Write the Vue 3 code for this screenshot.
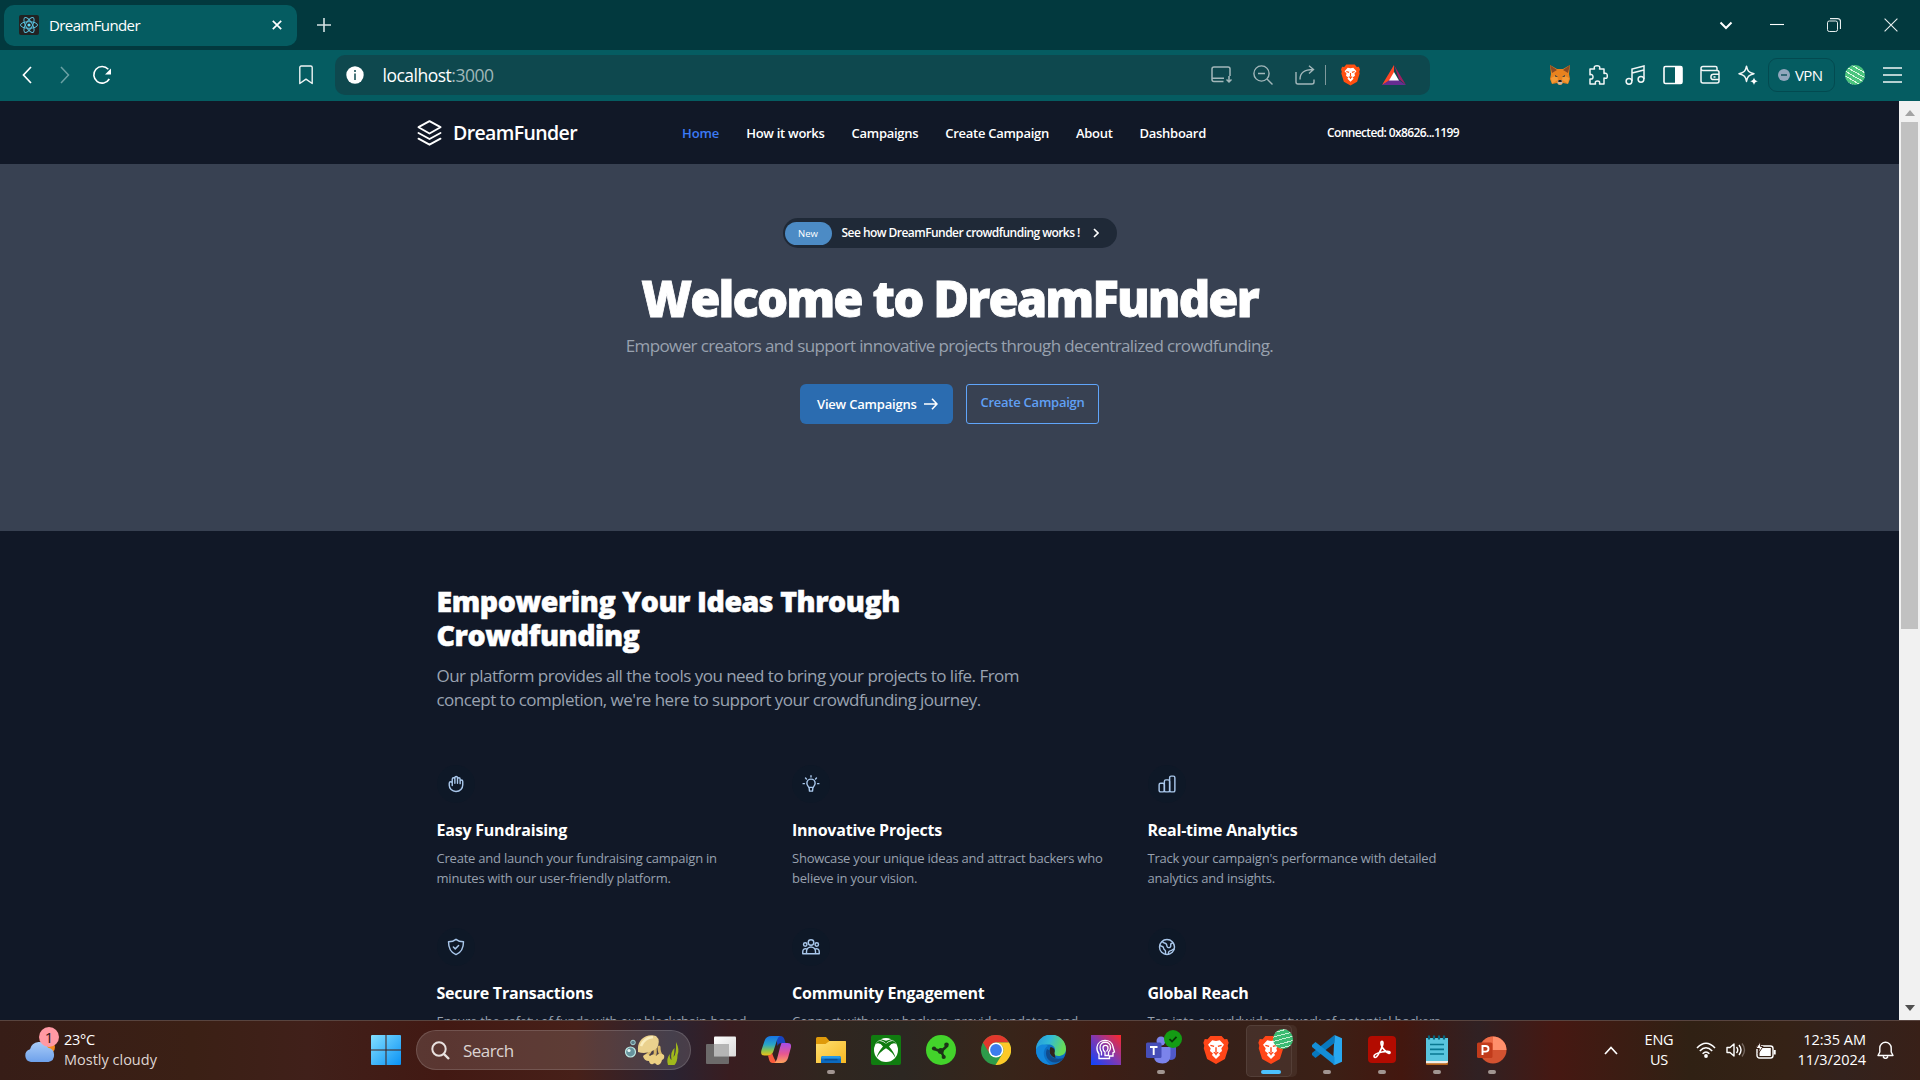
<script setup>
const nav = [
  { label: 'Home', active: true },
  { label: 'How it works' },
  { label: 'Campaigns' },
  { label: 'Create Campaign' },
  { label: 'About' },
  { label: 'Dashboard' },
]

const features = [
  { icon: 'hand', title: 'Easy Fundraising', lines: ['Create and launch your fundraising campaign in', 'minutes with our user-friendly platform.'] },
  { icon: 'bulb', title: 'Innovative Projects', lines: ['Showcase your unique ideas and attract backers who', 'believe in your vision.'] },
  { icon: 'chart', title: 'Real-time Analytics', lines: ["Track your campaign's performance with detailed", 'analytics and insights.'] },
  { icon: 'shield', title: 'Secure Transactions', lines: ['Ensure the safety of funds with our blockchain-based'] },
  { icon: 'people', title: 'Community Engagement', lines: ['Connect with your backers, provide updates, and'] },
  { icon: 'globe', title: 'Global Reach', lines: ['Tap into a worldwide network of potential backers'] },
]

const lionPath = 'M9 1h12l3 3.5 3-.2 1.5 4-1 3.2.6 2.5-3.6 11.5L15 31 5.500 25.500 1.900 14l.6-2.500-1-3.200 1.500-4 3 .2z'
const facePath = 'M15 6.500l4-.8 4.500 4.800-2.800 3.500.7 3-3.200 2.600 1.200 1.800L15 25.500l-4.400-4.100 1.200-1.800L8.600 17l.7-3-2.800-3.500L11 5.700z'
const browCut = 'M9 11l4 1.200M21 11l-4 1.200M15 13v5M12.500 18.500l2.500 1.200 2.500-1.200M15 19.700v2'
</script>

<template>
  <div class="screen">
    <header class="tabstrip">
      <div class="tab">
        <svg class="favicon" viewBox="0 0 20 20">
          <rect width="20" height="20" rx="2" fill="#222" />
          <g fill="none" stroke="#58bfdc" stroke-width="1">
            <ellipse cx="10" cy="10" rx="8.500" ry="3.300" />
            <ellipse cx="10" cy="10" rx="8.500" ry="3.300" transform="rotate(60 10 10)" />
            <ellipse cx="10" cy="10" rx="8.500" ry="3.300" transform="rotate(120 10 10)" />
          </g>
          <circle cx="10" cy="10" r="1.600" fill="#61dafb" />
        </svg>
        <span class="tab-title">DreamFunder</span>
        <svg class="tab-close" viewBox="0 0 10 10"><path d="M.8.800l8.400 8.400M9.200.800L.8 9.200" stroke="#fff" stroke-width="1.700" /></svg>
      </div>
      <svg class="plus" viewBox="0 0 14 14"><path d="M7 0v14M0 7h14" stroke="#d5e2e3" stroke-width="1.600" /></svg>
      <div class="window-controls">
        <svg viewBox="0 0 14 14"><path d="M1.500 4.500L7 10l5.500-5.500" fill="none" stroke="#fff" stroke-width="2" /></svg>
        <svg viewBox="0 0 14 14"><path d="M0 6.500h14" stroke="#fff" stroke-width="1.100" /></svg>
        <svg viewBox="0 0 14 14"><g fill="none" stroke="#e8efef"><rect x=".5" y="3" width="10" height="10.500" rx="1.800" /><path d="M3 .6h7.500a3 3 0 0 1 3 3V11" stroke-width="1.200" /></g></svg>
        <svg viewBox="0 0 14 14"><path d="M.6.600l12.800 12.800M13.400.600L.6 13.400" stroke="#e8efef" stroke-width="1.100" /></svg>
      </div>
    </header>

    <div class="toolbar">
      <svg class="back" viewBox="0 0 10 18"><path d="M9 1L1.500 9 9 17" fill="none" stroke="#fff" stroke-width="1.700" /></svg>
      <svg class="forward" viewBox="0 0 10 18"><path d="M1 1l7.500 8L1 17" fill="none" stroke="#6ba1a4" stroke-width="1.500" /></svg>
      <svg class="reload" viewBox="0 0 20 20"><path d="M16.300 4.300A8.300 8.300 0 1 0 17.300 14" fill="none" stroke="#fff" stroke-width="1.600" /><path d="M19 3.500v6h-6z" fill="#fff" /></svg>
      <svg class="bookmark" viewBox="0 0 14 20"><path d="M.8 18.500V2.500Q.8 1 2.300 1h9.400q1.500 0 1.500 1.500v16L7 14.200z" fill="none" stroke="#eef4f4" stroke-width="1.400" stroke-linejoin="round" /></svg>
      <div class="address">
        <svg class="info" viewBox="0 0 18 18"><circle cx="9" cy="9" r="8.700" fill="#fff" /><path d="M9 4v2M9 7.500V14" stroke="#49757a" stroke-width="2" /></svg>
        <span class="url">localhost<i>:3000</i></span>
        <div class="address-icons">
          <svg viewBox="0 0 22 20" class="i22"><g fill="none" stroke="#a3b7ba" stroke-width="1.500"><path d="M12.500 16.500H3a2 2 0 0 1-2-2V4a2 2 0 0 1 2-2h14a2 2 0 0 1 2 2v7M1 13.300h12" /><path d="M18 11v6M15.500 14.500L18 17l2.500-2.500" /></g></svg>
          <svg viewBox="0 0 20 20" class="i20"><g fill="none" stroke="#a3b7ba" stroke-width="1.400"><circle cx="8.500" cy="8.500" r="7.600" /><path d="M14 14l5.500 5.500M5 8.500h7" /></g></svg>
          <svg viewBox="0 0 20 20" class="i20"><g fill="none" stroke="#a3b7ba" stroke-width="1.400"><path d="M1 7v10q0 2 2 2h14q2 0 2-2v-2.500M5 14.500C5 7.500 9 4.500 18.500 4.500M14 .700l4.500 3.800L14 8.500" /></g></svg>
          <span class="divider"></span>
          <svg viewBox="0 0 30 32" class="lion"><path :d="lionPath" fill="#ff4f10" /><path :d="facePath" fill="#fff" /><path :d="browCut" fill="none" stroke="#ff4f10" stroke-width="1.600" /></svg>
          <svg viewBox="0 0 24 20" class="bat"><path d="M12 0L0 20l12-6.500z" fill="#ff4724" /><path d="M12 0l12 20-7-6z" fill="#9e1f63" /><path d="M0 20h24l-7.500-5H7.500z" fill="#662d91" /><path d="M12 7l5 8.500H7z" fill="#fff" /></svg>
        </div>
      </div>
      <div class="extensions">
        <svg viewBox="0 0 20 20" class="i20">
          <path d="M0 0l7 4h6l7-4-1 9 1 5-2 5-5-1-2 2H9l-2-2-5 1-2-5 1-5z" fill="#e8821e" />
          <path d="M0 0l7 5-5 3zM20 0l-7 5 5 3z" fill="#8b4a24" />
          <path d="M1 13l6-3 1 5-6 3.500zM19 13l-6-3-1 5 6 3.500z" fill="#f49a35" />
          <path d="M5 10l3 1.500-2.500.5zM15 10l-3 1.500 2.500.5z" fill="#27343c" /><path d="M8 15h4l.5 3-1 1.500h-3l-1-1.500z" fill="#c5b7a8" /><path d="M8.500 15h3l.3 2H8.200z" fill="#222" />
        </svg>
        <svg viewBox="0 0 20 20" class="i20"><path d="M2 4h4.500C5.500 1 7.500.800 9 .800S12.500 1 11.500 4H16v4.500c3-.8 3.300 1 3.300 2.500S19 14 16 13v6h-4.500c.6-2.500-.5-3-2-3s-2.600.5-2 3H2v-5c2.500.5 3-.8 3-2s-.5-3-3-2.300z" fill="none" stroke="#f1f6f6" stroke-width="1.500" stroke-linejoin="round" /></svg>
        <svg viewBox="0 0 20 20" class="i20"><g fill="none" stroke="#f1f6f6" stroke-width="1.500"><path d="M7 16V4l12-3v13M7 8l12-3" /><circle cx="4" cy="16.300" r="2.900" /><circle cx="16" cy="14.300" r="2.900" /></g></svg>
        <svg viewBox="0 0 20 20" class="i20"><rect x="1" y="1.500" width="18" height="17" rx="1.500" fill="none" stroke="#fff" stroke-width="1.600" /><path d="M12 1.500h7v17h-7z" fill="#fff" /></svg>
        <svg viewBox="0 0 20 20" class="i20"><g fill="none" stroke="#f1f6f6" stroke-width="1.500"><path d="M17 5.500V3q0-1.500-1.500-1.500H3Q1 1.500 1 3.500V16q0 2 2 2h14q2 0 2-2V7.500q0-2-2-2H3q-2 0-2-2M19 9.300h-5.500a2.600 2.600 0 0 0 0 5.200H19M13.500 12h2" /></g></svg>
        <svg viewBox="0 0 20 20" class="i20"><path d="M8.500 1.200C9.500 6 10.500 7.500 16 8.700 10.500 10 9.500 11.500 8.500 16.400 7.500 11.500 6.500 10 1 8.700 6.500 7.500 7.500 6 8.500 1.200z" fill="none" stroke="#f1f6f6" stroke-width="1.500" stroke-linejoin="round" /><path d="M16 12.500q.5 3 3.800 3.700Q16.500 17 16 20q-.5-3-3.800-3.800 3.300-.7 3.800-3.700z" fill="#fff" /></svg>
      </div>
      <div class="vpn">
        <svg viewBox="0 0 12 12"><circle cx="6" cy="6" r="6" fill="#91a6bc" /><path d="M3 6h6" stroke="#1c5963" stroke-width="1.600" /></svg>
        <span>VPN</span>
      </div>
      <span class="avatar"></span>
      <svg class="menu" viewBox="0 0 19 16"><path d="M0 1h19M0 8h19M0 15h19" stroke="#f1f6f6" stroke-width="1.400" /></svg>
    </div>

    <div class="viewport">
      <div class="page">
        <div class="site-header">
          <svg class="logo" viewBox="0 0 24 26"><g fill="none" stroke="#fff" stroke-width="1.900" stroke-linejoin="round" stroke-linecap="round"><path d="M12 1.200l11 6-11 6.300-11-6.300z" /><path d="M1 13l11 6 11-6M1 18.700l11 6 11-6" /></g></svg>
          <span class="brand">DreamFunder</span>
          <nav>
            <a v-for="n in nav" :key="n.label" :class="{ active: n.active }">{{ n.label }}</a>
          </nav>
          <span class="wallet">Connected: 0x8626...1199</span>
        </div>

        <section class="hero">
          <div class="notice">
            <span class="badge">New</span>
            <span class="notice-text">See how DreamFunder crowdfunding works !</span>
            <svg viewBox="0 0 6 10"><path d="M1 1l4 4-4 4" fill="none" stroke="#fff" stroke-width="1.600" /></svg>
          </div>
          <h1>Welcome to DreamFunder</h1>
          <p>Empower creators and support innovative projects through decentralized crowdfunding.</p>
          <div class="actions">
            <a class="primary"><span>View Campaigns</span><svg viewBox="0 0 14 12"><path d="M0 6h13M8 .800L13 6l-5 5.200" fill="none" stroke="#fff" stroke-width="1.600" /></svg></a>
            <a class="outline">Create Campaign</a>
          </div>
        </section>

        <section class="features">
          <h2>Empowering Your Ideas Through<br />Crowdfunding</h2>
          <p class="lead">Our platform provides all the tools you need to bring your projects to life. From<br />concept to completion, we're here to support your crowdfunding journey.</p>
          <div class="grid">
            <article v-for="f in features" :key="f.title">
              <span class="disc">
                <svg viewBox="0 0 24 24">
                  <g v-if="f.icon === 'hand'">
                    <path d="M7 14V5.500a1.750 1.750 0 0 1 3.500 0V11M10.500 5V3.700a1.750 1.750 0 0 1 3.500 0V11M14 5.500a1.750 1.750 0 0 1 3.500 0V11.500M17.500 8.500a1.750 1.750 0 0 1 3.500 0V13c0 5-3.500 9-9 9s-9-4-9-8.500V11a2 2 0 0 1 4 0" />
                  </g>
                  <g v-else-if="f.icon === 'bulb'">
                    <path d="M9 16.500c-.3-1.500-2.500-2.700-2.500-5.500a5.500 5.500 0 0 1 11 0c0 2.800-2.200 4-2.500 5.500zM9.500 17l.5 4.500h4l.5-4.500M12 1v1.800M1.500 11.500h1.700M20.800 11.500h1.700M4.700 4l1.200 1.300M19.300 4l-1.200 1.300" />
                  </g>
                  <g v-else-if="f.icon === 'chart'">
                    <rect x="1.500" y="11" width="7" height="11.500" rx="2" /><rect x="8.500" y="6.500" width="7" height="16" rx="2" /><rect x="15.500" y="1.500" width="7" height="21" rx="2" />
                  </g>
                  <g v-else-if="f.icon === 'shield'">
                    <path d="M12 1.800C9.300 4 6 5 2 5c0 8 2 14 10 17.200C20 19 22 13 22 5c-4 0-7.300-1-10-3.200zM8.500 12l2.500 2.500 4.500-4.500" />
                  </g>
                  <g v-else-if="f.icon === 'people'">
                    <circle cx="12" cy="6" r="3.700" /><circle cx="4.300" cy="8.700" r="2.300" /><circle cx="19.700" cy="8.700" r="2.300" />
                    <path d="M6 21v-3a6 6 0 0 1 12 0v3M6 14.500c-3-.8-5 1-5 4V21h22v-2.500c0-3-2-4.800-5-4" />
                  </g>
                  <g v-else>
                    <circle cx="12" cy="12" r="10" />
                    <path d="M6 4.500c.5 3 3.500 1.500 5 3.500s0 3.500 2 4.500 4.500-.3 4-3 1-2.500 3-3M2.500 10c2.500 1.500 5 1 5 3.500s2.500 2 2.500 4v4M14 21.500c-.5-3 1-4.500 3-4.700s2-1.800 4.300-1.800" />
                  </g>
                </svg>
              </span>
              <h3>{{ f.title }}</h3>
              <p><template v-for="l in f.lines" :key="l">{{ l }}<br /></template></p>
            </article>
          </div>
        </section>
      </div>
      <div class="scrollbar">
        <svg viewBox="0 0 10 6"><path d="M0 6l5-6 5 6z" fill="#a3a3a3" /></svg>
        <span class="thumb"></span>
        <svg viewBox="0 0 10 6"><path d="M0 0l5 6 5-6z" fill="#505050" /></svg>
      </div>
    </div>

    <footer class="taskbar">
      <div class="weather">
        <svg viewBox="0 0 36 30">
          <defs><linearGradient id="cloud" x2="0" y2="1"><stop offset="0" stop-color="#a9ccf8" /><stop offset="1" stop-color="#6ea1eb" /></linearGradient></defs>
          <circle cx="24" cy="14" r="7" fill="#f58a1e" />
          <path d="M7 29a6.500 6.500 0 0 1-1-12.700 9.500 9.500 0 0 1 18-1.600A7.300 7.300 0 0 1 24.500 29z" fill="url(#cloud)" />
        </svg>
        <span class="count">1</span>
        <div class="forecast"><b>23°C</b><span>Mostly cloudy</span></div>
      </div>

      <svg class="start" viewBox="0 0 30 30">
        <defs><linearGradient id="win" x2="1" y2="1"><stop offset="0" stop-color="#83dfff" /><stop offset="1" stop-color="#0a92f5" /></linearGradient></defs>
        <path d="M0 1q0-1 1-1h13.500v14.500H0zM15.500 0H29q1 0 1 1v13.500H15.500zM0 15.500h14.500V30H1q-1 0-1-1zM15.500 15.500H30V29q0 1-1 1H15.500z" fill="url(#win)" />
      </svg>

      <div class="search">
        <svg class="mag" viewBox="0 0 19 19"><circle cx="8" cy="8" r="6.700" fill="none" stroke="#e8e1df" stroke-width="2" /><path d="M12.800 12.800L18 18" stroke="#e8e1df" stroke-width="2.400" /></svg>
        <span>Search</span>
        <svg class="jelly" viewBox="0 0 56 32">
          <circle cx="6.500" cy="18" r="5" fill="#67939d" stroke="#bde7e3" stroke-width="1.200" /><circle cx="5" cy="16.500" r="1.600" fill="#e6f8f5" />
          <circle cx="9" cy="8.500" r="2.300" fill="#5d7e8b" stroke="#a7d5d5" />
          <path d="M27 15q-1 4-4 6M31 14q1 5-1 9M35 13q0 6 3 9" fill="none" stroke="#d9b868" stroke-width="3" stroke-linecap="round" />
          <path d="M19 22q4-4 7 0 3-3 6 0 3-4 8-1 1 4-2 5-1 5-5 5-2-3-4-1-3 1-4-3-5 0-6-5z" fill="#ecd083" />
          <path d="M14 16C13 6 22-1 32 2q5 4 1 12-9 7-19 4z" fill="#ead18e" /><path d="M17 12q3-8 12-9" fill="none" stroke="#faedbd" stroke-width="2.500" />
          <path d="M44 31q-2-7 2-11-1 4 1.500 6-1.500-8 3-12 0 5-1 9 3-2 2.500-15 4 8 1.500 13 0 7-3 10z" fill="#a0b91b" />
        </svg>
      </div>

      <div class="apps">
        <div class="app">
          <svg viewBox="0 0 30 30"><defs><linearGradient id="tv" x2="1" y2="1"><stop offset="0" stop-color="#fff" /><stop offset="1" stop-color="#d9d9d9" /></linearGradient></defs><rect x="8" y="1.500" width="22" height="20" rx="1" fill="url(#tv)" /><rect y="9" width="23" height="20" rx="1" fill="#727272" opacity=".9" /><path d="M8 9h15v12.500H8z" fill="#b5b5b5" /></svg>
        </div>
        <div class="app">
          <svg viewBox="0 0 30 30">
            <defs>
              <linearGradient id="cpa" x2="0" y2="1"><stop offset="0" stop-color="#1674e6" /><stop offset=".45" stop-color="#2aa6c5" /><stop offset=".75" stop-color="#8dc34b" /><stop offset="1" stop-color="#f0c019" /></linearGradient>
              <linearGradient id="cpb" x2="0" y2="1"><stop offset="0" stop-color="#a64dea" /><stop offset=".55" stop-color="#e9578f" /><stop offset="1" stop-color="#ffa45b" /></linearGradient>
            </defs>
            <path d="M15 1h4.500q3 0 4 3.500L24.500 8h-4q-3 0-4 3z" fill="#1844c0" />
            <path d="M10.500 1H19q-2 1-3 4l-3.500 11q-1.500 4.500-5 4.500H3.500Q-1 20.500.5 15L3.500 6Q5 1 10.500 1z" fill="url(#cpa)" />
            <path d="M7 20.500q3 0 4-2.500l1.500 4 3 6h-4q-2.500 0-3.300-3z" fill="#fa5b3c" />
            <path d="M20.500 8h6q4.500 0 3.300 5L27 23q-1.500 5-6.500 5H13q2-1 3-4l3-11.500Q20 9 20.500 8z" fill="url(#cpb)" />
          </svg>
        </div>
        <div class="app dot">
          <svg viewBox="0 0 30 30"><defs><linearGradient id="fold" x2="1" y2="1"><stop offset="0" stop-color="#ffdf70" /><stop offset="1" stop-color="#f7b923" /></linearGradient></defs><path d="M0 3.500Q0 2 1.500 2H10l3.500 4H29q1 0 1 1v10H0z" fill="#df9a0b" /><path d="M0 9h9.500l4-3H29q1 0 1 1v21H0z" fill="url(#fold)" /><path d="M5 28v-5q0-2 2-2h16q2 0 2 2v5z" fill="#0b6abf" /><path d="M5 23.500q0-2.500 2-2.500h16q2 0 2 2.500z" fill="#2699e8" /><path d="M8.500 24.700h13" stroke="#0b4e93" stroke-width="1.500" /></svg>
        </div>
        <div class="app">
          <svg viewBox="0 0 30 30"><rect width="30" height="30" rx="2" fill="#107c10" /><circle cx="15" cy="15" r="12" fill="#fff" /><path d="M6.500 6.500q4-1.500 8.500 2.200 4.500-3.700 8.500-2.200L21 4l-6 1.800L9 4z M8 5q4 0 7 3.500Q18 5 22 5L25.500 9q-4-2.500-7.500 2.500 5.500 6 6.500 11.500-3-6-9.500-9.800Q8.500 17 5.500 23 6.500 17.500 12 11.500 8.500 6.500 4.500 9z" fill="#107c10" /></svg>
        </div>
        <div class="app">
          <svg viewBox="0 0 30 30"><circle cx="15" cy="15" r="15" fill="#43d32b" /><path d="M15 16.500L8.500 14M15 16.500l6.500-6M15 16.500L18 22" stroke="#1c3317" stroke-width="2.600" /><g fill="#1c3317"><circle cx="8" cy="13.500" r="2.100" /><circle cx="20.500" cy="9.800" r="2.300" /><circle cx="17.700" cy="22" r="2.100" /><circle cx="14.800" cy="16" r="3" /></g></svg>
        </div>
        <div class="app">
          <svg viewBox="0 0 30 30"><circle cx="15" cy="15" r="15" fill="#2d9b4a" /><path d="M2 7.500a15 15 0 0 1 26 0H15a7.500 7.500 0 0 0-6.500 11z" fill="#e2382c" /><path d="M28 7.500A15 15 0 0 1 14.500 30L21.500 18.700A7.500 7.500 0 0 0 15 7.500z" fill="#fdc928" /><circle cx="15" cy="15" r="7.400" fill="#fff" /><circle cx="15" cy="15" r="5.900" fill="#3b7ded" /></svg>
        </div>
        <div class="app">
          <svg viewBox="0 0 30 30">
            <defs><linearGradient id="edge" x2="1" y2=".3"><stop offset="0" stop-color="#2396dc" /><stop offset=".5" stop-color="#32bad7" /><stop offset="1" stop-color="#66dc58" /></linearGradient></defs>
            <circle cx="15" cy="15" r="15" fill="#0c6fc4" />
            <path d="M0 15A15 15 0 0 1 30 14c0 5-4 7-7.500 7-3 0-5-1.300-4.500-3 3-5-1-8.500-5.500-8.500C7 9.500 1 12 0 15z" fill="url(#edge)" />
            <path d="M11 14c-3 6 1 14 9 13.500 4-.5 6.500-2.500 8-5-5 2.500-15.500 1.500-14.500-7z" fill="#114a8b" /><path d="M0 15c2-6 9-6.500 12-4-5 2-7 12 3 19A15 15 0 0 1 0 15z" fill="#1387dc" />
            <path d="M14.500 12c-2 5-.5 9 5 11l-1-5c1-3-.5-5.500-4-6z" fill="#30221b" />
          </svg>
        </div>
        <div class="app">
          <svg viewBox="0 0 30 30"><defs><linearGradient id="head" x1="0" y1="1" x2="1" y2="0"><stop offset="0" stop-color="#0b45ff" /><stop offset=".5" stop-color="#8038b2" /><stop offset="1" stop-color="#ff2828" /></linearGradient></defs><rect width="30" height="30" fill="url(#head)" /><g fill="none" stroke="#fff" stroke-width="1.300"><path d="M8 23.500v-4.500q-2.500-3-2-7C7 3.500 21 3 22 12l1.500 5-1.500.7v3.300h-3.500v2.500z" /><path d="M10.500 20.500v-3.500q-1.500-2-1.500-4.500c0-7 10.500-7 10.500 0q0 3-2 4.500v3.500h-3.500v-3.500q-2-1.500-2-4c0-3.500 5-3.500 5 0q0 2-1.500 3.500" /></g></svg>
        </div>
        <div class="app dot">
          <svg viewBox="0 0 30 30"><circle cx="15" cy="6" r="4.500" fill="#7b83eb" /><circle cx="25" cy="8" r="4" fill="#5059c9" /><path d="M21 12h9v8q0 5-6 5z" fill="#5059c9" /><path d="M8 12h16.500v8q0 8.500-8 8.500T8 22z" fill="#7b83eb" /><rect y="7.500" width="15.500" height="15.500" rx="1.500" fill="#464eb8" /><path d="M4 12h7.500M7.700 12v8" stroke="#fff" stroke-width="1.900" /></svg>
          <svg class="presence" viewBox="0 0 18 18"><circle cx="9" cy="9" r="9" fill="#149c14" /><path d="M5.500 9.200L8 11.500l4.500-4.700" fill="none" stroke="#073807" stroke-width="1.800" /></svg>
        </div>
        <div class="app">
          <svg viewBox="0 0 30 32"><path :d="lionPath" fill="#ff4618" /><path :d="facePath" fill="#fff" /><path :d="browCut" fill="none" stroke="#ff4618" stroke-width="1.500" /></svg>
        </div>
        <div class="app current">
          <svg viewBox="0 0 30 32"><path :d="lionPath" fill="#ff4618" /><path :d="facePath" fill="#fff" /><path :d="browCut" fill="none" stroke="#ff4618" stroke-width="1.500" /></svg>
          <span class="profile"></span>
        </div>
        <div class="app dot">
          <svg viewBox="0 0 30 30"><path d="M22.500 0L30 3.200v23.600L22.500 30l-1.500-1z" fill="#28a8f0" /><path d="M22.500 0v8L3.500 23 0 20v-2z" fill="#0878be" /><path d="M0 12V10l3.500-3 19 15v8z" fill="#148ed7" /></svg>
        </div>
        <div class="app dot">
          <svg viewBox="0 0 30 30"><rect x="1" y="1" width="28" height="27" rx="4" fill="#b30b00" /><path d="M7 21c0-3 16-6.500 16-3.500 0 3.500-9-4-9-9.500 0-3 3-2 1.500 2.500C14 15 10 23 8 22.500q-1-.3-1-1.500z" fill="none" stroke="#fff" stroke-width="1.700" /></svg>
        </div>
        <div class="app dot">
          <svg viewBox="0 0 30 30"><path d="M4 26h22v3q0 1-1 1H5q-1 0-1-1z" fill="#b8661c" /><path d="M4 25h22v2.500l-2 .7H4z" fill="#f0eeea" /><path d="M4 3h22v23H4z" fill="#59c5de" /><path d="M7 .5v4M12 .5v4M17 .5v4M22 .5v4" stroke="#07657d" stroke-width="2.200" /><path d="M8 9.500h14M8 14.300h14M8 19h14" stroke="#087791" stroke-width="1.700" /></svg>
        </div>
        <div class="app dot">
          <svg viewBox="0 0 30 30"><circle cx="16" cy="15" r="13.500" fill="#d35230" /><path d="M16 1.500A13.500 13.500 0 0 1 29.500 15H16z" fill="#ff8f6b" /><path d="M16 1.500V15H2.500A13.500 13.500 0 0 1 16 1.500z" fill="#ed6c47" /><rect y="7.500" width="15.500" height="15.500" rx="1.500" fill="#c13b1b" /><path d="M5.500 20v-9h3q3 0 3 2.800t-3 2.800h-3" fill="none" stroke="#fff" stroke-width="1.900" /></svg>
        </div>
      </div>

      <div class="tray">
        <svg class="up" viewBox="0 0 14 9"><path d="M1 8l6-6.500L13 8" fill="none" stroke="#fff" stroke-width="1.700" /></svg>
        <div class="lang">ENG<br />US</div>
        <svg class="wifi" viewBox="0 0 20 16"><g fill="none" stroke="#fff" stroke-width="1.500"><path d="M1 6q9-9.500 18 0M3.800 9q6.200-6.500 12.400 0M6.600 11.800q3.400-3.600 6.800 0" /></g><circle cx="10" cy="14" r="1.900" fill="#fff" /></svg>
        <svg class="volume" viewBox="0 0 20 16"><g fill="none" stroke="#fff" stroke-width="1.400" stroke-linejoin="round"><path d="M1 5.500h3L8 2v12l-4-3.500H1zM10.500 5q2.500 3 0 6M13 3q4 5 0 10" /><path d="M16 1.500q5 6.500 0 13" stroke="#75675f" /></g></svg>
        <svg class="battery" viewBox="0 0 20 17"><rect x="1" y="4" width="16" height="12" rx="2.500" fill="none" stroke="#fff" stroke-width="1.400" /><path d="M3.500 6h11.300v8H3.500z" fill="#fff" /><path d="M18.700 8v4.500" stroke="#fff" stroke-width="2" /><path d="M4 0L0 6.500h3.300l-1 5 4.700-7H4.500z" fill="#fff" stroke="#3a2117" stroke-width="1" /></svg>
        <div class="clock">12:35 AM<br />11/3/2024</div>
        <svg class="bell" viewBox="0 0 17 19"><path d="M1 14.500l1.800-3.500V7a5.700 5.700 0 0 1 11.400 0v4l1.800 3.500zM6 15.500q2.500 3.800 5 0" fill="none" stroke="#fff" stroke-width="1.400" stroke-linejoin="round" /></svg>
      </div>
    </footer>
  </div>
</template>

<style>
body { margin: 0; overflow: hidden; background: #111827; }
</style>

<style scoped>
* { box-sizing: border-box; }
svg { display: block; flex: none; }
h1, h2, h3, p { margin: 0; }
.screen { width: 1920px; height: 1080px; overflow: hidden; display: flex; flex-direction: column; color: #fff; font-family: "Open Sans", "Noto Sans", sans-serif; white-space: nowrap; }

.tabstrip { height: 50px; flex: none; background: #02393e; display: flex; align-items: center; padding-left: 4px; }
.tab { width: 293px; height: 41px; border-radius: 10px; background: #055c61; display: flex; align-items: center; padding: 0 15px; }
.favicon { width: 20px; height: 20px; }
.tab-title { font-size: 15px; letter-spacing: -.6px; margin-left: 10px; flex: 1; }
.tab-close { width: 10px; height: 10px; }
.plus { width: 14px; height: 14px; margin-left: 20px; }
.window-controls { margin-left: auto; padding-right: 22px; display: flex; gap: 43px; }
.window-controls svg { width: 14px; height: 14px; }
.window-controls svg:first-child { margin-right: -6px; }

.toolbar { height: 51px; flex: none; background: #055c61; display: flex; align-items: center; padding-bottom: 1px; }
.back { width: 10px; height: 18px; margin-left: 22px; }
.forward { width: 10px; height: 18px; margin-left: 28px; }
.reload { width: 20px; height: 20px; margin-left: 22px; }
.bookmark { width: 14px; height: 20px; margin-left: 187px; }
.address { width: 1095px; height: 40px; margin-left: 22px; border-radius: 10px; background: #0e484e; display: flex; align-items: center; padding: 0 24px 0 11px; }
.info { width: 18px; height: 18px; }
.url { margin-left: 18.500px; font-size: 17.500px; letter-spacing: -.5px; padding-bottom: 1px; }
.url i { font-style: normal; color: #9fb6b8; }
.address-icons { margin-left: auto; display: flex; align-items: center; }
.i22 { width: 22px; height: 20px; margin-right: 20px; }
.i20 { width: 20px; height: 20px; }
.address-icons .i20 { margin-right: 22px; }
.address-icons .i20 + .i20 { margin-right: 10px; }
.divider { width: 1px; height: 20px; background: #7f999c; margin-right: 14px; }
.lion { width: 21px; height: 24px; margin-right: 21px; }
.bat { width: 24px; height: 20px; }
.extensions { display: flex; gap: 17.600px; margin-left: 120px; }
.vpn { width: 67px; height: 34px; margin-left: 10px; border: 1.500px solid #034a50; border-radius: 9px; display: flex; align-items: center; padding-left: 9px; gap: 5px; font-size: 15px; letter-spacing: -.6px; }
.vpn svg { width: 12px; height: 12px; }
.avatar { width: 20px; height: 20px; border-radius: 50%; margin-left: 10px; background: repeating-linear-gradient(30deg, #4bc47e 0 3.200px, #dcf8e4 3.200px 4.200px); }
.menu { width: 19px; height: 16px; margin-left: 18px; }

.viewport { height: 919px; flex: none; display: flex; overflow: hidden; }
.page { width: 1899px; background: #111827; overflow: hidden; }
.site-header { height: 63px; display: flex; align-items: center; padding-left: 417px; }
.logo { width: 25px; height: 26px; }
.brand { width: 229px; margin-left: 11px; font-size: 19.500px; font-weight: 600; letter-spacing: -.62px; }
nav { width: 645px; display: flex; gap: 27px; font-size: 13px; font-weight: 600; letter-spacing: -.28px; }
nav a:first-child { letter-spacing: -.1px; }
nav .active { color: #3b7af5; }
.wallet { font-size: 12px; font-weight: 600; letter-spacing: -.62px; }

.hero { height: 367px; background: #384152; padding-top: 54px; display: flex; flex-direction: column; align-items: center; }
.notice { width: 334px; height: 30px; border-radius: 15px; background: #1f2937; display: flex; align-items: center; padding-left: 2px; }
.badge { width: 47px; height: 23px; border-radius: 12px; background: #4c8bc5; font-size: 9.500px; display: flex; align-items: center; justify-content: center; }
.notice-text { width: 251px; margin-left: 10px; font-size: 12px; font-weight: 600; letter-spacing: -.54px; padding-bottom: 1px; }
.notice svg { width: 6px; height: 10px; }
h1 { font-size: 49px; line-height: 60px; font-weight: 800; letter-spacing: -1.920px; -webkit-text-stroke: .8px #fff; margin-top: 20px; }
.hero p { font-size: 17px; line-height: 26px; color: #98a1af; letter-spacing: -.62px; margin-top: 5px; }
.actions { display: flex; gap: 13px; margin-top: 25px; font-size: 13px; font-weight: 600; letter-spacing: -.2px; }
.primary { width: 153px; height: 40px; border-radius: 6px; background: #2b6cb0; display: flex; align-items: center; justify-content: space-between; padding: 0 15px 0 17px; }
.primary svg { width: 14px; height: 14px; }
.outline { width: 133px; height: 40px; border: 1px solid #60a5fa; border-radius: 3px; color: #60a0f5; text-align: center; line-height: 35px; letter-spacing: -.25px; }

.features { padding: 53px 0 0 436.500px; }
h2 { font-size: 28.500px; line-height: 34px; font-weight: 800; letter-spacing: -.44px; -webkit-text-stroke: .5px #fff; }
.lead { font-size: 17px; line-height: 24px; color: #9aa3b1; letter-spacing: -.53px; margin-top: 12px; }
.grid { display: grid; grid-template-columns: repeat(3, 355.500px); grid-auto-rows: 163px; margin-top: 53px; }
.disc { width: 38px; height: 38px; border-radius: 50%; background: #0e1827; display: flex; align-items: center; justify-content: center; }
.disc svg { width: 18px; height: 18px; fill: none; stroke: #a9c7eb; stroke-width: 1.900; stroke-linecap: round; stroke-linejoin: round; }
h3 { font-size: 16px; line-height: 24px; font-weight: 700; letter-spacing: -.22px; margin-top: 15px; }
.grid p { font-size: 13px; line-height: 20px; color: #98a1af; letter-spacing: -.22px; margin-top: 6px; }

.scrollbar { width: 21px; background: #f1f1f1; display: flex; flex-direction: column; align-items: center; padding: 9px 0 9px; }
.scrollbar svg { width: 10px; height: 6px; }
.thumb { width: 17px; height: 507px; margin: 6px 0 auto; background: #c1c1c1; }

.taskbar { height: 60px; flex: none; border-top: 1px solid #58443f; display: flex; align-items: center; padding-bottom: 1px; background: linear-gradient(90deg, #371d17 0%, #3b2015 10%, #40201a 16%, #421913 23%, #472019 30%, #2a2332 35%, #391d20 38%, #30261f 43%, #2c2722 47%, #37251a 52%, #3e1e15 57%, #34201a 62%, #3b2016 69%, #43170f 73%, #302123 77%, #461812 81%, #302114 88%, #352216 93%, #33221d 96%, #382018 100%); }
.weather { width: 370.500px; display: flex; align-items: center; position: relative; padding-left: 24px; flex: none; }
.weather svg { width: 36px; height: 30px; margin-top: -4px; }
.count { position: absolute; left: 39px; top: -3px; width: 20px; height: 20px; border-radius: 50%; background: #ff99a4; color: #2a1416; font-size: 15px; line-height: 20px; text-align: center; }
.forecast { display: flex; flex-direction: column; font-size: 14.500px; line-height: 20px; margin-left: 4px; letter-spacing: 0; color: #dfd5d2; padding-bottom: 1px; }
.forecast b { font-weight: 400; color: #fff; letter-spacing: -.25px; }
.start { width: 30px; height: 30px; }
.search { width: 275px; height: 40px; margin-left: 15.500px; border-radius: 20px; border: 1px solid rgba(255, 255, 255, .14); background: rgba(255, 255, 255, .13); display: flex; align-items: center; padding: 0 10px 0 14px; flex: none; }
.mag { width: 19px; height: 19px; }
.search span { font-size: 17px; color: #dcd4d2; margin-left: 13px; letter-spacing: -.55px; }
.jelly { width: 56px; height: 32px; margin-left: auto; }
.apps { display: flex; margin-left: 2.500px; height: 58px; flex: none; }
.app { width: 55.050px; height: 58px; position: relative; display: flex; align-items: center; justify-content: center; }
.app > svg { width: 30px; height: 30px; }
.dot::after, .current::after { content: ""; position: absolute; bottom: 5px; left: 23.500px; width: 8px; height: 4px; border-radius: 2px; background: #a19591; }
.current::after { width: 20px; left: 17.500px; background: #4cc2ff; }
.current::before { content: ""; position: absolute; left: 2.500px; top: 4px; width: 44px; height: 50px; border-radius: 5px; background: rgba(255, 255, 255, .07); border: 1px solid rgba(255, 255, 255, .08); box-shadow: 5px 0 0 rgba(255, 255, 255, .06); }
.current > svg { position: relative; }
.app > .presence { position: absolute; width: 18px; height: 18px; left: 30px; top: 9px; }
.profile { position: absolute; left: 29px; top: 8px; width: 20px; height: 20px; border-radius: 50%; background: repeating-linear-gradient(165deg, #3bbb72 0 3.200px, #c6efd3 3.200px 4.200px); }
.tray { display: flex; align-items: center; margin-left: auto; padding-right: 26px; font-size: 14.500px; line-height: 20px; }
.up { width: 14px; height: 9px; }
.lang { width: 40px; margin-left: 21px; text-align: center; letter-spacing: -.2px; }
.wifi { width: 20px; height: 16px; margin-left: 17px; }
.volume { width: 20px; height: 16px; margin-left: 10px; }
.battery { width: 20px; height: 17px; margin-left: 10px; }
.clock { width: 80px; margin-left: 10px; text-align: right; letter-spacing: -.02px; padding-bottom: 1px; }
.bell { width: 17px; height: 19px; margin-left: 11px; }
</style>
